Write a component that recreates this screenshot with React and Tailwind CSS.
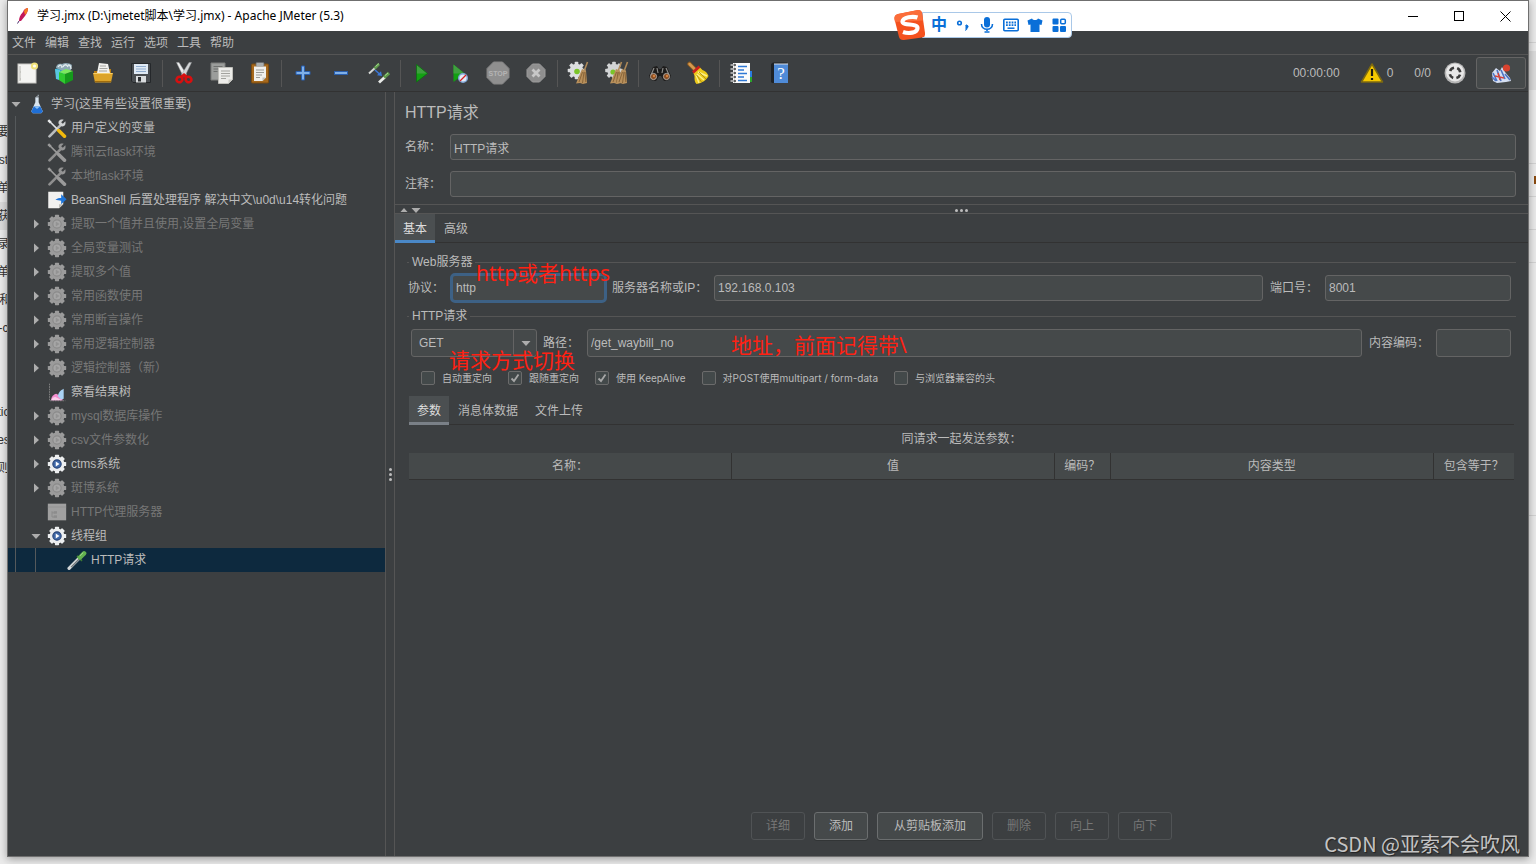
// App.jsx
// JMeter main window: title bar, menus, toolbar, test plan tree and HTTP sampler form

import { useState } from 'react';
import clsx from 'clsx';

/* ---------- toolbar icons ---------- */

const Svg = ({ size = 24, children }) => (
  <svg width={size} height={size} viewBox="0 0 24 24" fill="none" aria-hidden="true" className="shrink-0">
    {children}
  </svg>
);

const NewIcon = () => (
  <Svg>
    <rect x="3" y="3" width="18" height="19" fill="#f4f4f2" stroke="#c9c9c5" />
    <path d="M5 5v15M5 11h1M5 18h1" stroke="#b5b5b0" />
    <circle cx="19.5" cy="5" r="3.6" fill="#f0e27a" />
    <circle cx="19.5" cy="5" r="1.6" fill="#fffef0" />
  </Svg>
);

const TemplatesIcon = () => (
  <Svg>
    <path d="M2 8l9-2v15l-7-3z" fill="#2f9fc4" />
    <path d="M2 8l5 1v10l-4-1z" fill="#58c7e0" />
    <path d="M3 7c0-4 4-5 6-4 3-2 8-1 10 1l-1 5-8 1z" fill="#8fa9b5" />
    <path d="M5 6c2-3 4-2 4 1M10 6c1-3 4-3 5 0M15 4c2 0 3 2 3 4" stroke="#e4edf0" strokeWidth="1.3" />
    <path d="M6 11l6 2v10l-6-4z" fill="#2fc92f" />
    <path d="M12 13l8-3v9l-8 4z" fill="#159a1b" />
    <path d="M6 11l7-3 7 2-8 3z" fill="#7bea5e" />
  </Svg>
);

const OpenIcon = () => (
  <Svg>
    <path d="M3 10h4l1-2h12v4H3z" fill="#b97d12" />
    <path d="M8 2l9 1 2 9H6z" fill="#f1f1ee" />
    <path d="M9 5h6M8.500 7.500h8M8 10h8" stroke="#a5a5a0" />
    <path d="M2 12h20l-2 9.500H4z" fill="#dca42a" />
    <path d="M2.500 12.500h19" stroke="#f5cf6c" />
    <path d="M3.800 20.500h16.400" stroke="#a06c0c" />
  </Svg>
);

const SaveIcon = () => (
  <Svg>
    <path d="M2.500 2.500h19v19H4l-1.500-1.500z" fill="#4a4e52" stroke="#25282b" />
    <rect x="5" y="3" width="14" height="10" fill="#dfe9f4" />
    <path d="M7 5.500h10M7 8h10M7 10.500h10" stroke="#8facce" />
    <rect x="7" y="15" width="10" height="6.500" fill="#d9dcde" />
    <rect x="9" y="16" width="3" height="4.500" fill="#2b2e31" />
  </Svg>
);

const CutIcon = () => (
  <Svg>
    <path d="M4.500 1.500l2.500 0 7.500 12-3 2.500z" fill="#eceeee" stroke="#9a9c9e" strokeWidth=".5" />
    <path d="M19.500 1.500l-2.500 0-7.500 12 3 2.500z" fill="#d3d6d8" stroke="#9a9c9e" strokeWidth=".5" />
    <ellipse cx="7.500" cy="18.500" rx="3" ry="2.700" transform="rotate(-25 7.500 18.500)" stroke="#d81010" strokeWidth="2.600" />
    <ellipse cx="16.500" cy="18.500" rx="3" ry="2.700" transform="rotate(25 16.500 18.500)" stroke="#d81010" strokeWidth="2.600" />
    <path d="M9.500 16l2.500-2 2.500 2" stroke="#d81010" strokeWidth="3" />
  </Svg>
);

const CopyIcon = () => (
  <Svg>
    <path d="M1 2h14v17H1z" fill="#9b9d9b" stroke="#7b7d7b" />
    <path d="M3.500 5.500h9M3.500 8h9M3.500 10.500h4" stroke="#6f716f" />
    <path d="M8.500 6.500h14v12l-4 4h-10z" fill="#ecece9" stroke="#bfbfba" />
    <path d="M11 10h9M11 12.500h9M11 15h9M11 17.500h5" stroke="#a3a39e" />
    <path d="M18.500 22.500v-4h4z" fill="#c9c9c4" />
  </Svg>
);

const PasteIcon = () => (
  <Svg>
    <rect x="3.500" y="3" width="17" height="19" rx="1" fill="#a5681c" stroke="#7a4a0e" />
    <rect x="8" y="1.500" width="8" height="4" rx="1" fill="#a9adae" stroke="#66696a" strokeWidth=".7" />
    <path d="M6 5.500h12v11l-3.500 3.500H6z" fill="#f0f0ed" />
    <path d="M8 9h8M8 11.500h8M8 14h6M8 16.500h4" stroke="#9b9b96" />
    <path d="M14.500 20v-3.500H18z" fill="#c3c3be" />
  </Svg>
);

const PlusIcon = () => (
  <Svg>
    <path d="M10.500 5h3v5.500H19v3h-5.500V19h-3v-5.500H5v-3h5.500z" fill="#7fb0e8" stroke="#2a5fae" />
  </Svg>
);

const MinusIcon = () => (
  <Svg>
    <rect x="5.500" y="10.500" width="13" height="3" fill="#7fb0e8" stroke="#2a5fae" />
  </Svg>
);

const ToggleIcon = () => (
  <Svg>
    <path d="M2 12.500l6-5.500" stroke="#d7dad7" strokeWidth="2" />
    <path d="M7.500 7.500L12 3" stroke="#5f9a4c" strokeWidth="2.800" />
    <path d="M8.500 5.500L12 2.500" stroke="#a5d890" strokeWidth="1" />
    <path d="M12 21.500l6-5.500" stroke="#e9ebe9" strokeWidth="2.800" />
    <path d="M17 16.500l5-4.500" stroke="#5f9a4c" strokeWidth="3.200" />
    <path d="M18 14.500l3-2.500" stroke="#a5d890" strokeWidth="1" />
    <path d="M8 9l4.500 4" stroke="#3b78d8" strokeWidth="1.500" />
    <path d="M15 15l-5-.8 4-4z" fill="#3b78d8" />
  </Svg>
);

const StartIcon = () => (
  <Svg>
    <path d="M6.500 3.500L17.500 12.500 6.500 21z" fill="#12a012" />
    <path d="M6.500 3.500L17.500 12.500H6.500z" fill="#3f9f3f" />
    <path d="M6.500 3.500L17.500 12.500 6.500 21z" stroke="#0b6e10" strokeWidth=".8" />
  </Svg>
);

const StartNoPauseIcon = () => (
  <Svg>
    <path d="M5.500 3.500L16.500 12.500 5.500 21z" fill="#12a012" />
    <path d="M5.500 3.500L16.500 12.500H5.500z" fill="#3f9f3f" />
    <circle cx="15" cy="17" r="4.300" fill="#e4ecf6" stroke="#7fa5d6" strokeWidth="1.400" />
    <path d="M12 20l6-6" stroke="#d42222" strokeWidth="1.300" />
  </Svg>
);

const StopIcon = () => (
  <Svg>
    <path d="M7.500 1h9L23 7.500v9L16.500 23h-9L1 16.500v-9z" fill="#8f8f8f" stroke="#858585" />
    <text x="12" y="15" textAnchor="middle" fontFamily="Liberation Sans, sans-serif" fontWeight="700" fontSize="7" fill="#b4b4b4">STOP</text>
  </Svg>
);

const ShutdownIcon = () => (
  <Svg>
    <path d="M8.500 3h7L21 8.500v7L15.500 21h-7L3 15.500v-7z" fill="#8f8f8f" stroke="#9c9c9c" />
    <path d="M8.500 8.500l7 7M15.500 8.500l-7 7" stroke="#c8c8c8" strokeWidth="2.800" />
  </Svg>
);

const Broom = ({ x = 0 }) => (
  <g transform={`translate(${x} 0)`}>
    <path d="M20.500 1l-3 8" stroke="#b08a58" strokeWidth="1.600" />
    <path d="M15 8l4 1.500 1 12.500-4 1-3-1-4 .5z" fill="#b8905c" />
    <path d="M15.500 11l-3.500 10M17 11l-1.500 11M18 11l.8 10" stroke="#7d5a30" strokeWidth=".8" />
  </g>
);

const GearShape = ({ cx, cy, r, tooth = 3.6, fill }) => (
  <g fill={fill}>
    <circle cx={cx} cy={cy} r={r} />
    {[0, 45, 90, 135].map((a) => (
      <rect key={a} x={cx - tooth / 2} y={cy - r - 2} width={tooth} height={2 * r + 4} rx=".8" transform={`rotate(${a} ${cx} ${cy})`} />
    ))}
  </g>
);

const ClearIcon = () => (
  <Svg>
    <GearShape cx={9.500} cy={9.500} r={6.800} fill="#dcdedf" />
    <circle cx="10" cy="10.500" r="2.800" fill="#7ac428" />
    <Broom />
  </Svg>
);

const ClearAllIcon = () => (
  <Svg>
    <GearShape cx={9} cy={9.500} r={6.800} fill="#d2d4d5" />
    <circle cx="8" cy="11" r="2.600" fill="#7ac428" />
    <Broom x={-4} />
    <Broom x={2} />
  </Svg>
);

const SearchIcon = () => (
  <Svg>
    <path d="M5 6l4-1 2 3h2l2-3 4 1 4 9-2 4-5 1-3-5h-2l-3 5-5-1-2-4z" fill="#1d1c1b" />
    <path d="M6 7l-3 7M18 7l3 7M9 7l1 5M15 7l-1 5" stroke="#8c8c8a" strokeWidth="1.200" />
    <circle cx="5.500" cy="15.500" r="3.100" fill="#8a4e23" stroke="#b5b0aa" strokeWidth=".9" />
    <circle cx="18.500" cy="15.500" r="3.100" fill="#8a4e23" stroke="#b5b0aa" strokeWidth=".9" />
    <circle cx="6" cy="15" r="1.200" fill="#d58442" />
    <circle cx="19" cy="15" r="1.200" fill="#d58442" />
  </Svg>
);

const ResetSearchIcon = () => (
  <Svg>
    <path d="M3.500 3l6 6" stroke="#8b5a20" strokeWidth="4.500" strokeLinecap="round" />
    <path d="M3.500 3l5 5" stroke="#d69a50" strokeWidth="2.500" strokeLinecap="round" />
    <path d="M7.500 12l6-6 3 3c3 1 5 3 6 6-2 4-6 7-12 8-2-2-2-4-2-8z" fill="#ecc91a" />
    <path d="M12 11l9 4M11 13l7 6M10 14l3 8" stroke="#fbf08a" strokeWidth="1.400" />
    <path d="M13 11l7 7M10.500 14l5 7" stroke="#a8870a" strokeWidth=".8" />
    <path d="M7 11.500l6.500-6" stroke="#c9201c" strokeWidth="2.800" />
  </Svg>
);

const FunctionIcon = () => (
  <Svg>
    <rect x="20" y="10" width="3" height="6" fill="#2a7de0" />
    <rect x="20" y="16" width="3" height="5" fill="#2aa52a" />
    <rect x="4" y="2" width="17" height="20" fill="#fbfbfb" />
    <path d="M9 5.500h9M9 9h6M9 12.500h9M9 16h6M9 19.500h9" stroke="#2f78d4" strokeWidth="1.300" />
    {[4, 8, 12, 16, 20].map((y) => (
      <g key={y}>
        <circle cx="5.500" cy={y} r="1.300" fill="#222" />
        <path d={`M1.500 ${y}h4`} stroke="#dedede" strokeWidth="1.300" />
      </g>
    ))}
  </Svg>
);

const HelpIcon = () => (
  <Svg>
    <path d="M4 3l2-1.500h14v1L8 4v18H5l-1-1z" fill="#1e2226" />
    <rect x="7" y="3" width="14" height="19" fill="#4f8bd8" />
    <path d="M7 3h14" stroke="#d8dee6" />
    <text x="14" y="18" textAnchor="middle" fontFamily="Liberation Serif, serif" fontSize="17" fill="#fff">?</text>
  </Svg>
);

const TOOLBAR = [
  [['新建', NewIcon], ['模板', TemplatesIcon], ['打开', OpenIcon], ['保存', SaveIcon]],
  [['剪切', CutIcon], ['复制', CopyIcon], ['粘贴', PasteIcon]],
  [['展开', PlusIcon], ['折叠', MinusIcon], ['切换', ToggleIcon]],
  [['启动', StartIcon], ['不停顿开始', StartNoPauseIcon], ['停止', StopIcon], ['关闭', ShutdownIcon]],
  [['清除', ClearIcon], ['清除全部', ClearAllIcon]],
  [['查找', SearchIcon], ['重置搜索', ResetSearchIcon]],
  [['函数助手', FunctionIcon], ['帮助', HelpIcon]],
];

/* ---------- tree icons ---------- */

const FlaskIcon = () => (
  <Svg size={20}>
    <path d="M10 4h4v6l5 11-2 2H7l-2-2 5-11z" fill="#d9e4ee" />
    <path d="M8 15h8l3 6-2 2H7l-2-2z" fill="#1f6fd6" />
    <path d="M8.500 15h7l-3.500 3z" fill="#8fc3f5" />
    <path d="M11 3.500h2M13.500 1v2" stroke="#9aa3ab" strokeWidth="1.600" />
  </Svg>
);

const ToolsIcon = ({ off }) => (
  <Svg size={20}>
    <path d="M3 22l14-14" stroke={off ? '#8f8f8f' : '#b9bcbe'} strokeWidth="3.200" strokeLinecap="round" />
    <path d="M22 4l-3 3-2-2 3-3c-4-1-7 1-6 5l3 3c4 1 6-2 5-6z" fill={off ? '#949494' : '#cfd2d4'} />
    <path d="M2 3l11 11" stroke={off ? '#9a9a9a' : '#dcdfe1'} strokeWidth="2" />
    <path d="M1.500 2.500l3 3" stroke={off ? '#9a9a9a' : '#e8eaeb'} strokeWidth="3" />
    <path d="M14 15l7 7" stroke={off ? '#9a9a9a' : '#f2b90c'} strokeWidth="4.200" strokeLinecap="round" />
  </Svg>
);

const PostIcon = () => (
  <Svg size={20}>
    <path d="M1.500 2h18v15l-5 5h-13z" fill="#f1f1ef" />
    <path d="M14.500 22v-5h5z" fill="#bcbcb8" />
    <path d="M10 11.500c2-1.500 5-2 7-2V5l6.500 6L17 17v-4c-2-.5-5-.5-7-1.500z" fill="#1d74d8" />
  </Svg>
);

const GearIcon = ({ off }) => (
  <Svg size={20}>
    <GearShape cx={12} cy={12} r={9} tooth={5} fill={off ? '#9b9b9b' : '#eceeef'} />
    <circle cx="12" cy="12" r="5" fill={off ? '#a6a6a6' : '#3f68a8'} stroke={off ? '#8a8a8a' : '#2a4678'} strokeWidth="1.400" />
    <path d="M10.500 9l4.500 3-4.500 3z" fill={off ? '#939393' : '#fff'} />
  </Svg>
);

const ResultIcon = () => (
  <Svg size={20}>
    <path d="M3 2v20.500h19" stroke="#8a8a8a" strokeDasharray="2 1" />
    <path d="M5 22c0-5 3-7 6-8l6 3 2 5z" fill="#f48fd0" />
    <path d="M13 17c1-5 3-7 7-9v12l-3 1z" fill="#a9d2f4" />
    <path d="M5 22c1-3 3-4 5-4l8 4z" fill="#fbd0ec" />
  </Svg>
);

const ServerIcon = () => (
  <Svg size={20}>
    <rect x="1" y="2" width="22" height="20" fill="#a0a0a0" />
    <path d="M1 6h22" stroke="#949494" />
    <path d="M6 11v7h4M6 13h4" stroke="#878787" />
    <rect x="8" y="11" width="4" height="3" fill="#8c8c8c" />
    <rect x="8" y="16" width="4" height="3" fill="#8c8c8c" />
  </Svg>
);

const DropperIcon = () => (
  <Svg size={20}>
    <path d="M2.500 22L15 9.500" stroke="#d3d7d9" strokeWidth="4" strokeLinecap="round" />
    <path d="M5 20.500L15 10.500" stroke="#6d7377" strokeWidth="1.400" />
    <path d="M12 7l6 6" stroke="#3d7a35" strokeWidth="2" />
    <path d="M15.500 9L20.500 4" stroke="#63b04f" strokeWidth="5.500" strokeLinecap="round" />
    <path d="M15.500 7l4-4" stroke="#a6dc94" strokeWidth="1.200" />
  </Svg>
);

const TREE = [
  { text: '学习(这里有些设置很重要)', depth: 0, icon: FlaskIcon, arrow: 'down' },
  { text: '用户定义的变量', depth: 1, icon: ToolsIcon },
  { text: '腾讯云flask环境', depth: 1, icon: ToolsIcon, off: true },
  { text: '本地flask环境', depth: 1, icon: ToolsIcon, off: true },
  { text: 'BeanShell 后置处理程序 解决中文\\u0d\\u14转化问题', depth: 1, icon: PostIcon },
  { text: '提取一个值并且使用,设置全局变量', depth: 1, icon: GearIcon, arrow: 'right', off: true },
  { text: '全局变量测试', depth: 1, icon: GearIcon, arrow: 'right', off: true },
  { text: '提取多个值', depth: 1, icon: GearIcon, arrow: 'right', off: true },
  { text: '常用函数使用', depth: 1, icon: GearIcon, arrow: 'right', off: true },
  { text: '常用断言操作', depth: 1, icon: GearIcon, arrow: 'right', off: true },
  { text: '常用逻辑控制器', depth: 1, icon: GearIcon, arrow: 'right', off: true },
  { text: '逻辑控制器（新）', depth: 1, icon: GearIcon, arrow: 'right', off: true },
  { text: '察看结果树', depth: 1, icon: ResultIcon },
  { text: 'mysql数据库操作', depth: 1, icon: GearIcon, arrow: 'right', off: true },
  { text: 'csv文件参数化', depth: 1, icon: GearIcon, arrow: 'right', off: true },
  { text: 'ctms系统', depth: 1, icon: GearIcon, arrow: 'right' },
  { text: '斑博系统', depth: 1, icon: GearIcon, arrow: 'right', off: true },
  { text: 'HTTP代理服务器', depth: 1, icon: ServerIcon, off: true },
  { text: '线程组', depth: 1, icon: GearIcon, arrow: 'down' },
  { text: 'HTTP请求', depth: 2, icon: DropperIcon, selected: true },
];

const Arrow = ({ dir }) => (
  <svg width="10" height="10" viewBox="0 0 10 10" fill="#adadad" aria-hidden="true">
    {dir === 'right' && <path d="M3 0.500l5 4.500-5 4.500z" />}
    {dir === 'down' && <path d="M0.500 3h9L5 8z" />}
    {dir === 'up' && <path d="M1.500 7h7L5 3z" />}
  </svg>
);

const TreeRow = ({ text, depth, icon: Icon, arrow, off, selected }) => (
  <li className={clsx('flex h-6 items-center whitespace-nowrap', selected && 'bg-[#0d293e]', off ? 'text-[#777777]' : 'text-[#bbbbbb]')}>
    {Array.from({ length: depth }, (_, i) => (
      <span key={i} className="h-full w-5 shrink-0 pl-[7px]">
        <span className="block h-full border-l border-[#55595b]" />
      </span>
    ))}
    <span className="flex w-4 shrink-0 justify-center">{arrow && <Arrow dir={arrow} />}</span>
    <span className="ml-[3px] mr-1 w-5 shrink-0"><Icon off={off} /></span>
    {text}
  </li>
);

/* ---------- input method bar ---------- */

const ImeBar = () => (
  <div className="absolute top-2 left-[886px] z-20 flex items-center text-[#0a6fd8]">
    <svg width="32" height="32" viewBox="0 0 32 32" className="relative z-10" aria-hidden="true">
      <path d="M4 5L24 1q3-.5 4 2.500L31 24q.5 4-3 4.500L10 31q-4 .500-5-3L0.500 10q-.5-4 3.500-5z" fill="#f4511e" />
      <path d="M4 5L24 1q3-.5 4 2.500l1 8L1 13l-.5-3q-.5-4 3.500-5z" fill="#fb6d3a" />
      <path d="M23.500 8.500C19 7 9 8 8.500 12.500 8.500 17 23.500 14 23.500 19c0 5-9 6-14.500 4" stroke="#fff" strokeWidth="4.200" fill="none" />
    </svg>
    <div className="-ml-1 flex h-[26px] items-center gap-2 rounded-r-sm border border-[#a9c8e8] bg-white pr-1 pl-2">
      <span className="w-4 text-center text-base leading-6 font-bold">中</span>
      <svg width="16" height="16" viewBox="0 0 16 16" aria-hidden="true">
        <circle cx="4.500" cy="6" r="1.800" fill="none" stroke="currentColor" strokeWidth="1.600" />
        <path d="M10.500 8.500a1.500 1.500 0 1 1 1.500 2.500c0 1-.5 2-1.500 2.500" fill="currentColor" stroke="currentColor" />
      </svg>
      <svg width="16" height="16" viewBox="0 0 16 16" aria-hidden="true">
        <rect x="5" y="0" width="6" height="10.500" rx="3" fill="currentColor" />
        <path d="M2.500 7c0 7 11 7 11 0M8 12v2M5.500 15h5" stroke="currentColor" strokeWidth="1.600" fill="none" />
      </svg>
      <svg width="16" height="16" viewBox="0 0 16 16" aria-hidden="true">
        <rect x=".8" y="2.300" width="14.400" height="11.400" rx="1" fill="none" stroke="currentColor" strokeWidth="1.600" />
        <path d="M3 5.500h10M3 8.200h10" stroke="currentColor" strokeWidth="1.800" strokeDasharray="1.800 1" />
        <path d="M4.500 11.200h7" stroke="currentColor" strokeWidth="1.500" />
      </svg>
      <svg width="16" height="16" viewBox="0 0 16 16" fill="currentColor" aria-hidden="true">
        <path d="M5 1.500c1 2 5 2 6 0l4.500 2-1 4.500-2-.5V15h-9V7.500l-2 .5-1-4.500z" />
      </svg>
      <svg width="16" height="16" viewBox="0 0 16 16" fill="currentColor" aria-hidden="true">
        <rect x="1.500" y="1.500" width="6" height="6" rx="1" />
        <rect x="1.500" y="9" width="6" height="6" rx="1" />
        <rect x="9" y="9" width="6" height="6" rx="1" />
        <rect x="9.700" y="2.200" width="4.600" height="4.600" rx="1" fill="none" stroke="currentColor" strokeWidth="1.500" />
      </svg>
    </div>
  </div>
);

/* ---------- form pieces ---------- */

const FIELD = 'min-w-0 rounded-[3px] border border-[#646464] bg-[#45494a] px-[3px] text-[#bbbbbb] outline-none';

const Tab = ({ active, grey, children }) => (
  <button
    type="button"
    role="tab"
    aria-selected={!!active}
    className={clsx(
      'h-[29px] border-b-3 px-2 pt-[3px]',
      active ? 'bg-[#4b4f51] text-[#dddddd]' : 'border-transparent',
      active && (grey ? 'border-[#7a8087]' : 'border-[#4a88c7]'),
    )}
  >
    {children}
  </button>
);

const Check = ({ id, label, initial = false }) => {
  const [on, setOn] = useState(initial);
  return (
    <div className="flex items-center gap-[7px]">
      <span className="relative flex">
        <input
          id={id}
          type="checkbox"
          checked={on}
          onChange={(e) => setOn(e.target.checked)}
          className="size-[14px] appearance-none rounded-[2px] border border-[#6b6b6b] bg-[#43494a]"
        />
        {on && (
          <svg width="14" height="14" viewBox="0 0 14 14" className="pointer-events-none absolute inset-0" aria-hidden="true">
            <path d="M3.500 7.500l2.500 2.500 4.500-6.500" stroke="#a7a7a7" strokeWidth="1.800" fill="none" />
          </svg>
        )}
      </span>
      <label htmlFor={id} className="font-['Inter','Noto_Sans_CJK_SC',sans-serif] text-[10px] leading-[14px]">{label}</label>
    </div>
  );
};

const Note = ({ className, children }) => (
  <span className={clsx("pointer-events-none absolute z-10 font-['Noto_Sans','Noto_Sans_CJK_SC',sans-serif] text-[21px] leading-7 whitespace-nowrap text-[#ff2113]", className)}>
    {children}
  </span>
);

const Action = ({ disabled, wide, children }) => (
  <button
    type="button"
    disabled={disabled}
    className={clsx(
      'h-7 rounded-[3px] border',
      wide ? 'px-4' : 'px-[14px]',
      disabled ? 'border-[#505355] text-[#777777]' : 'border-[#6b6e6f] bg-[#45494a] shadow-[0_1px_0_#323536]',
    )}
  >
    {children}
  </button>
);

const SamplerForm = () => (
  <main className="flex min-w-0 flex-1 flex-col border-l border-[#555555]">
    <div className="border-b border-[#555555] pt-[11px] pr-3 pb-[7px] pl-[10px]">
      <h1 className="text-base leading-5">HTTP请求</h1>
      <div className="mt-[11px] flex items-center">
        <label htmlFor="name" className="w-[45px]">名称：</label>
        <input id="name" defaultValue="HTTP请求" className={clsx(FIELD, 'h-[26px] flex-1')} />
      </div>
      <div className="mt-[11px] flex items-center">
        <label htmlFor="comment" className="w-[45px]">注释：</label>
        <input id="comment" className={clsx(FIELD, 'h-[26px] flex-1')} />
      </div>
    </div>

    <div className="grid h-[9px] grid-cols-3 items-center border-b border-[#555555]">
      <span className="flex gap-0.5 pl-1"><Arrow dir="up" /><Arrow dir="down" /></span>
      <span className="flex justify-center gap-[2px]">
        {[0, 1, 2].map((i) => <i key={i} className="size-[3px] rounded-full bg-[#bdbdbd]" />)}
      </span>
    </div>

    <div role="tablist" className="flex h-[29px] gap-px shadow-[inset_0_-1px_0_#323232]">
      <Tab active>基本</Tab>
      <Tab>高级</Tab>
    </div>

    <div className="flex flex-1 flex-col px-3 pt-[10px]">
      <fieldset className="border-t border-[#555555]">
        <legend className="ml-[2px] px-[3px] leading-[18px]">Web服务器</legend>
        <div className="flex items-center pt-[2px] pr-[5px] pl-px">
          <label htmlFor="protocol" className="w-[42px]">协议：</label>
          <div className="relative flex">
            <input id="protocol" defaultValue="http" className="h-[30px] w-[157px] rounded-[5px] border-3 border-[#3d6185] bg-[#45494a] px-[3px] outline-none" />
            <Note className="-top-[14px] left-[26px]">http或者https</Note>
          </div>
          <label htmlFor="server" className="ml-[5px] w-[102px]">服务器名称或IP：</label>
          <input id="server" defaultValue="192.168.0.103" className={clsx(FIELD, 'h-[26px] flex-1')} />
          <label htmlFor="port" className="ml-[7px] w-[55px]">端口号：</label>
          <input id="port" defaultValue="8001" className={clsx(FIELD, 'h-[26px] w-[186px]')} />
        </div>
      </fieldset>

      <fieldset className="mt-1 border-t border-[#555555]">
        <legend className="ml-[2px] px-[3px] leading-[18px]">HTTP请求</legend>
        <div className="flex items-center pt-1 pr-[5px] pl-1">
          <div className="relative flex">
            <select aria-label="HTTP请求" className="h-7 w-[126px] appearance-none rounded-[3px] border border-[#646464] bg-[#45494a] px-[7px] outline-none">
              <option>GET</option>
              <option>POST</option>
            </select>
            <span className="pointer-events-none absolute inset-y-0 right-0 flex w-6 items-center justify-center border-l border-[#646464]">
              <Arrow dir="down" />
            </span>
            <Note className="top-[17px] left-[38px]">请求方式切换</Note>
          </div>
          <label htmlFor="path" className="ml-[6px] w-[44px]">路径：</label>
          <div className="relative flex flex-1">
            <input id="path" defaultValue="/get_waybill_no" className={clsx(FIELD, 'h-7 flex-1')} />
            <Note className="top-[2px] left-36">地址，前面记得带\</Note>
          </div>
          <label htmlFor="encoding" className="ml-[7px] w-[67px]">内容编码：</label>
          <input id="encoding" className={clsx(FIELD, 'h-7 w-[75px]')} />
        </div>
        <div className="mt-[14px] flex items-center gap-4 pl-[14px]">
          <Check id="auto" label="自动重定向" />
          <Check id="follow" label="跟随重定向" initial />
          <Check id="keepalive" label="使用 KeepAlive" initial />
          <Check id="multipart" label="对POST使用multipart / form-data" />
          <Check id="compat" label="与浏览器兼容的头" />
        </div>
      </fieldset>

      <div className="mt-[11px] flex flex-1 flex-col px-[2px]">
        <div role="tablist" className="flex h-[29px] gap-px shadow-[inset_0_-1px_0_#323232]">
          <Tab active grey>参数</Tab>
          <Tab>消息体数据</Tab>
          <Tab>文件上传</Tab>
        </div>
        <p className="h-7 text-center leading-7">同请求一起发送参数：</p>
        <table className="w-full table-fixed border-collapse">
          <thead>
            <tr className="h-[26px] border-b border-[#323232] bg-[#45494a]">
              <th className="border-r border-[#323232] font-normal">名称：</th>
              <th className="border-r border-[#323232] font-normal">值</th>
              <th className="w-[56px] border-r border-[#323232] font-normal">编码？</th>
              <th className="border-r border-[#323232] font-normal">内容类型</th>
              <th className="w-[81px] font-normal">包含等于？</th>
            </tr>
          </thead>
        </table>
      </div>

      <div className="mb-4 flex justify-center gap-[9px]">
        <Action disabled>详细</Action>
        <Action>添加</Action>
        <Action wide>从剪贴板添加</Action>
        <Action disabled>删除</Action>
        <Action disabled>向上</Action>
        <Action disabled>向下</Action>
      </div>
    </div>
  </main>
);

/* ---------- window ---------- */

const TitleBar = () => (
  <header className="flex h-[30px] items-center bg-white text-black">
    <svg width="16" height="18" viewBox="0 0 16 18" className="mr-[6px] ml-[7px]" aria-hidden="true">
      <path d="M8 5c1-3 3-4 5-4 0 3-1 5-3 8L6 14H4c0-3 1-6 4-9z" fill="#c2185b" />
      <path d="M9 4c1-2 2.500-3 4-3 0 3-1 5-3 7z" fill="#f57c20" />
      <path d="M4 14L2.500 16.500" stroke="#4a2a6a" />
    </svg>
    <span className="flex-1 font-['Noto_Sans','Noto_Sans_CJK_SC',sans-serif]">学习.jmx (D:\jmetet脚本\学习.jmx) - Apache JMeter (5.3)</span>
    <button type="button" aria-label="最小化" className="flex h-full w-[46px] items-center justify-center">
      <svg width="11" height="11" stroke="#000" fill="none"><path d="M0 5.500h10" /></svg>
    </button>
    <button type="button" aria-label="最大化" className="flex h-full w-[46px] items-center justify-center">
      <svg width="11" height="11" stroke="#000" fill="none"><rect x=".5" y=".5" width="9" height="9" /></svg>
    </button>
    <button type="button" aria-label="关闭窗口" className="flex h-full w-[46px] items-center justify-center">
      <svg width="11" height="11" stroke="#000" fill="none"><path d="M.5.500l10 10M10.500.500l-10 10" /></svg>
    </button>
  </header>
);

const Toolbar = () => (
  <div className="flex h-[37px] items-center border-b border-[#323232]">
    {TOOLBAR.map((group, i) => (
      <div key={i} className="flex items-center">
        {i > 0 && <span className="mx-[2px] h-[27px] border-l border-[#555555]" />}
        {group.map(([label, Icon]) => (
          <button key={label} type="button" aria-label={label} className="flex w-[38px] justify-center"><Icon /></button>
        ))}
      </div>
    ))}
    <div className="ml-auto flex items-center">
      <span className="mr-5">00:00:00</span>
      <Svg>
        <path d="M12 3L22.500 21h-21z" fill="#f5c800" stroke="#7d6a10" strokeWidth="1.500" strokeLinejoin="round" />
        <path d="M12 8v7M12 17v2" stroke="#1c1a10" strokeWidth="2.200" />
      </Svg>
      <span className="ml-[3px]">0</span>
      <span className="mr-3 ml-[21px]">0/0</span>
      <Svg>
        <circle cx="12" cy="12" r="10.500" fill="#b5b5b5" />
        <circle cx="12" cy="11.500" r="9" fill="#e8e8e8" />
        <circle cx="12" cy="12" r="5.300" stroke="#3c3c3c" strokeWidth="2.600" strokeDasharray="5 3.320" strokeDashoffset="-1.660" />
      </Svg>
      <button type="button" aria-label="语言" className="mr-[2px] ml-[9px] flex h-8 w-[50px] items-center justify-center rounded-[3px] border border-[#646464] bg-[#45494a]">
        <Svg>
          <path d="M3 12l4-5 4 3 2-4 3 5 5 6 1 3-5 1-9 1-4-2z" fill="#d5dff2" />
          <path d="M4 12l4 8M8 9l4 11M12 9l4 9M3 16l4 4M16 13l5 6" stroke="#4d74c4" strokeWidth="1.600" />
          <path d="M6 15l9 2M9 12l2 7" stroke="#d6443c" strokeWidth="1.400" />
          <circle cx="17.500" cy="7" r="3.600" fill="#d8432f" />
        </Svg>
      </button>
    </div>
  </div>
);

const BEHIND = ['要', 'st', '单', '获', '录', '单', 't和', '-c', '', '', 'tic', 'es', '则'];

export default function App() {
  return (
    <div lang="zh-CN" className="flex min-h-screen bg-[#ebebeb] font-['Liberation_Sans','Noto_Sans_CJK_SC',sans-serif] text-xs text-[#bbbbbb]">
      <div className="w-[7px] shrink-0 overflow-hidden pt-[118px] text-[#333333]" aria-hidden="true">
        {BEHIND.map((t, i) => (
          <div key={i} className={clsx('flex h-7 items-center justify-center whitespace-nowrap', i === 3 && 'bg-[#dcdcdc]')}>{t}</div>
        ))}
      </div>

      <div className="relative mb-[7px] flex min-w-0 flex-1 flex-col border border-[#6f6f6f] bg-[#3c3f41] shadow-[0_2px_8px_rgba(0,0,0,0.35)]">
        <TitleBar />
        <nav className="flex h-6 items-center gap-px border-b border-[#555555]">
          {['文件', '编辑', '查找', '运行', '选项', '工具', '帮助'].map((m) => (
            <button key={m} type="button" className="px-1">{m}</button>
          ))}
        </nav>
        <Toolbar />
        <div className="flex flex-1">
          <ul className="w-[378px] shrink-0 border-r border-[#555555]">
            {TREE.map((row) => <TreeRow key={row.text + row.depth} {...row} />)}
          </ul>
          <div className="flex w-2 shrink-0 flex-col items-center justify-center gap-[2px]">
            {[0, 1, 2].map((i) => <i key={i} className="size-[3px] rounded-full bg-[#bdbdbd]" />)}
          </div>
          <SamplerForm />
        </div>
        <ImeBar />
        <span className="pointer-events-none absolute right-2 -bottom-[2px] font-['Noto_Sans_CJK_SC',sans-serif] text-xl leading-7 text-[#c4c4c4] [text-shadow:1px_1px_1px_#222]">
          CSDN @亚索不会吹风
        </span>
      </div>

      <div className="w-[7px] shrink-0" aria-hidden="true">
        <div className="h-[43px] border-b border-[#d4d4d4]" />
        <div className="mt-2 h-[39px] bg-[#dcdcdc]" />
        <div className="h-[74px] border-b border-[#d4d4d4]" />
        <div className="flex h-[33px] items-center justify-end overflow-hidden border-b border-[#d4d4d4]">
          <i className="h-2 w-0.5 bg-[#8a4b10]" />
        </div>
        <div className="h-[33px] border-b border-[#d4d4d4]" />
        <div className="h-[33px] border-b border-[#d4d4d4]" />
        <div className="h-[253px] border-b border-[#d4d4d4]" />
      </div>
    </div>
  );
}
